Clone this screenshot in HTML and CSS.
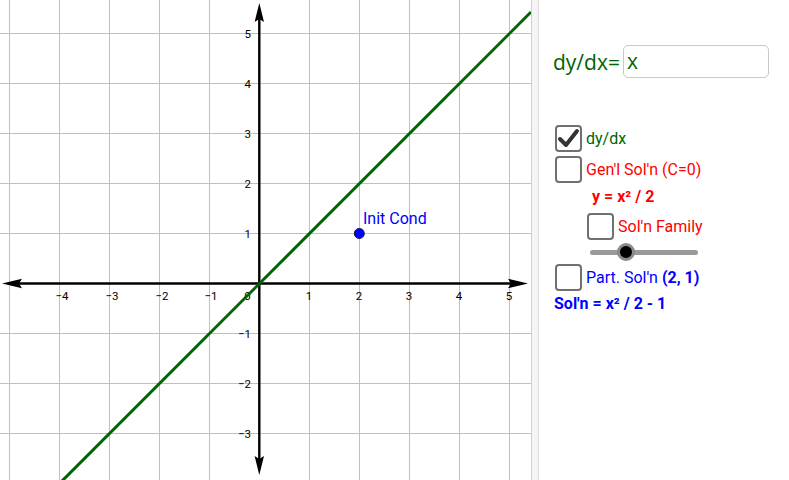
FILE: index.html
```html
<!DOCTYPE html>
<html>
<head>
<meta charset="utf-8">
<link rel="stylesheet" href="styles.css">
</head>
<body>
<div class="app">
  <div class="graphics">
    <svg class="plot" width="531" height="480" viewBox="0 0 531 480" xmlns="http://www.w3.org/2000/svg">
      <g class="grid" stroke="#c0c0c0" stroke-width="1">
        <line x1="9.5" y1="0" x2="9.5" y2="480"/>
        <line x1="59.5" y1="0" x2="59.5" y2="480"/>
        <line x1="109.5" y1="0" x2="109.5" y2="480"/>
        <line x1="159.5" y1="0" x2="159.5" y2="480"/>
        <line x1="209.5" y1="0" x2="209.5" y2="480"/>
        <line x1="309.5" y1="0" x2="309.5" y2="480"/>
        <line x1="359.5" y1="0" x2="359.5" y2="480"/>
        <line x1="409.5" y1="0" x2="409.5" y2="480"/>
        <line x1="459.5" y1="0" x2="459.5" y2="480"/>
        <line x1="509.5" y1="0" x2="509.5" y2="480"/>
        <line x1="0" y1="33.5" x2="531" y2="33.5"/>
        <line x1="0" y1="83.5" x2="531" y2="83.5"/>
        <line x1="0" y1="133.5" x2="531" y2="133.5"/>
        <line x1="0" y1="183.5" x2="531" y2="183.5"/>
        <line x1="0" y1="233.5" x2="531" y2="233.5"/>
        <line x1="0" y1="333.5" x2="531" y2="333.5"/>
        <line x1="0" y1="383.5" x2="531" y2="383.5"/>
        <line x1="0" y1="433.5" x2="531" y2="433.5"/>
      </g>
      <g class="axes" stroke="#000" stroke-width="2.4">
        <line x1="8" y1="283.5" x2="522" y2="283.5"/>
        <line x1="259.3" y1="12" x2="259.3" y2="466"/>
      </g>
      <g fill="#000">
        <polygon points="259.3,3 264,22 259.3,19 254.6,22"/>
        <polygon points="259.3,475 264,456 259.3,459 254.6,456"/>
        <polygon points="2,283.5 22,278.8 19,283.5 22,288.2"/>
        <polygon points="528,283.5 508,278.8 511,283.5 508,288.2"/>
      </g>
      <g class="ticks" font-family="Roboto, 'Liberation Sans', sans-serif" font-size="11.5" fill="#000">
        <text x="62" y="300" text-anchor="middle">−4</text>
        <text x="112" y="300" text-anchor="middle">−3</text>
        <text x="162" y="300" text-anchor="middle">−2</text>
        <text x="211" y="300" text-anchor="middle">−1</text>
        <text x="247.5" y="300" text-anchor="middle">0</text>
        <text x="309" y="300" text-anchor="middle">1</text>
        <text x="359" y="300" text-anchor="middle">2</text>
        <text x="409" y="300" text-anchor="middle">3</text>
        <text x="459" y="300" text-anchor="middle">4</text>
        <text x="509" y="300" text-anchor="middle">5</text>
        <text x="251" y="38" text-anchor="end">5</text>
        <text x="251" y="88" text-anchor="end">4</text>
        <text x="251" y="138" text-anchor="end">3</text>
        <text x="251" y="188" text-anchor="end">2</text>
        <text x="251" y="238" text-anchor="end">1</text>
        <text x="251" y="338" text-anchor="end">−1</text>
        <text x="251" y="388" text-anchor="end">−2</text>
        <text x="251" y="438" text-anchor="end">−3</text>
      </g>
      <line x1="0" y1="543" x2="531" y2="12" stroke="#006400" stroke-width="3"/>
      <circle cx="359.3" cy="233.5" r="5" fill="#0000ff" stroke="#1a1a3a" stroke-width="1"/>
      <text x="363" y="224" font-family="Roboto, 'Liberation Sans', sans-serif" font-size="16" fill="#0000ff">Init Cond</text>
    </svg>
  </div>
  <div class="divider"></div>
  <div class="panel">
    <div class="eq-row">
      <span class="eq-label">dy/dx=</span>
      <div class="eq-input">x</div>
    </div>
    <div class="cb-row first">
      <div class="cb checked">
        <svg width="23" height="23" viewBox="0 0 23 23"><path d="M3 12 L9 18 L20 4" fill="none" stroke="#333" stroke-width="4" stroke-linecap="round" stroke-linejoin="round"/></svg>
      </div>
      <span class="txt green">dy/dx</span>
    </div>
    <div class="cb-row gap">
      <div class="cb"></div>
      <span class="txt red">Gen'l Sol'n (C=0)</span>
    </div>
    <div class="line red bold indent1">y = x² / 2</div>
    <div class="cb-row indent2 fam">
      <div class="cb"></div>
      <span class="txt red">Sol'n Family</span>
    </div>
    <div class="slider">
      <div class="track"></div>
      <div class="knob"></div>
    </div>
    <div class="cb-row">
      <div class="cb"></div>
      <span class="txt blue">Part. Sol'n <b>(2, 1)</b></span>
    </div>
    <div class="line blue bold last">Sol'n = x² / 2 - 1</div>
  </div>
</div>
</body>
</html>
```

FILE: styles.css
```css
html, body {
  margin: 0;
  padding: 0;
  background: #fff;
}
.app {
  display: flex;
  width: 789px;
  height: 480px;
  overflow: hidden;
}
.graphics {
  width: 531px;
  height: 480px;
  flex: none;
}
.plot {
  display: block;
}
.divider {
  width: 6px;
  flex: none;
  background: #f5f5f5;
  border-left: 1px solid #d0d0d0;
  border-right: 1px solid #dcdcdc;
}
.panel {
  flex: 1;
  display: flex;
  flex-direction: column;
  padding: 45px 0 0 14px;
  font-family: Roboto, "Liberation Sans", sans-serif;
}
.eq-row {
  display: flex;
  align-items: center;
  height: 33px;
}
.eq-label {
  font-family: "Open Sans", "Noto Sans", sans-serif;
  font-size: 21px;
  color: #006400;
  width: 70px;
}
.eq-input {
  box-sizing: border-box;
  width: 146px;
  height: 33px;
  border: 1px solid #c8c8c8;
  border-radius: 5px;
  font-family: "Open Sans", "Noto Sans", sans-serif;
  font-size: 21px;
  color: #006400;
  padding-left: 3px;
  line-height: 30px;
}
.cb-row {
  display: flex;
  align-items: center;
  margin-left: 2px;
  height: 27px;
}
.cb-row.first {
  margin-top: 47px;
}
.cb-row.gap {
  margin-top: 4px;
}
.cb {
  box-sizing: border-box;
  width: 27px;
  height: 27px;
  border: 2px solid #707070;
  border-radius: 4px;
  margin-right: 4px;
  display: flex;
  align-items: center;
  justify-content: center;
  flex: none;
}
.txt {
  font-size: 16px;
}
.txt b {
  font-weight: bold;
}
.green { color: #006400; }
.red { color: #ff0000; }
.blue { color: #0000ff; }
.bold { font-weight: bold; }
.line {
  font-size: 16px;
  height: 20px;
  line-height: 20px;
}
.indent1 {
  margin-left: 39px;
  margin-top: 4px;
}
.indent2 {
  margin-left: 34px;
}
.fam {
  margin-top: 6px;
}
.slider {
  position: relative;
  height: 24px;
  margin-left: 37px;
  width: 108px;
}
.track {
  position: absolute;
  left: 0;
  right: 0;
  top: 10px;
  height: 5px;
  border-radius: 3px;
  background: #999;
}
.knob {
  position: absolute;
  left: 27px;
  top: 3px;
  width: 12px;
  height: 12px;
  border-radius: 50%;
  background: #000;
  border: 3px solid #8a8a8a;
}
.line.last {
  margin-top: 3px;
  margin-left: 1px;
}
```
